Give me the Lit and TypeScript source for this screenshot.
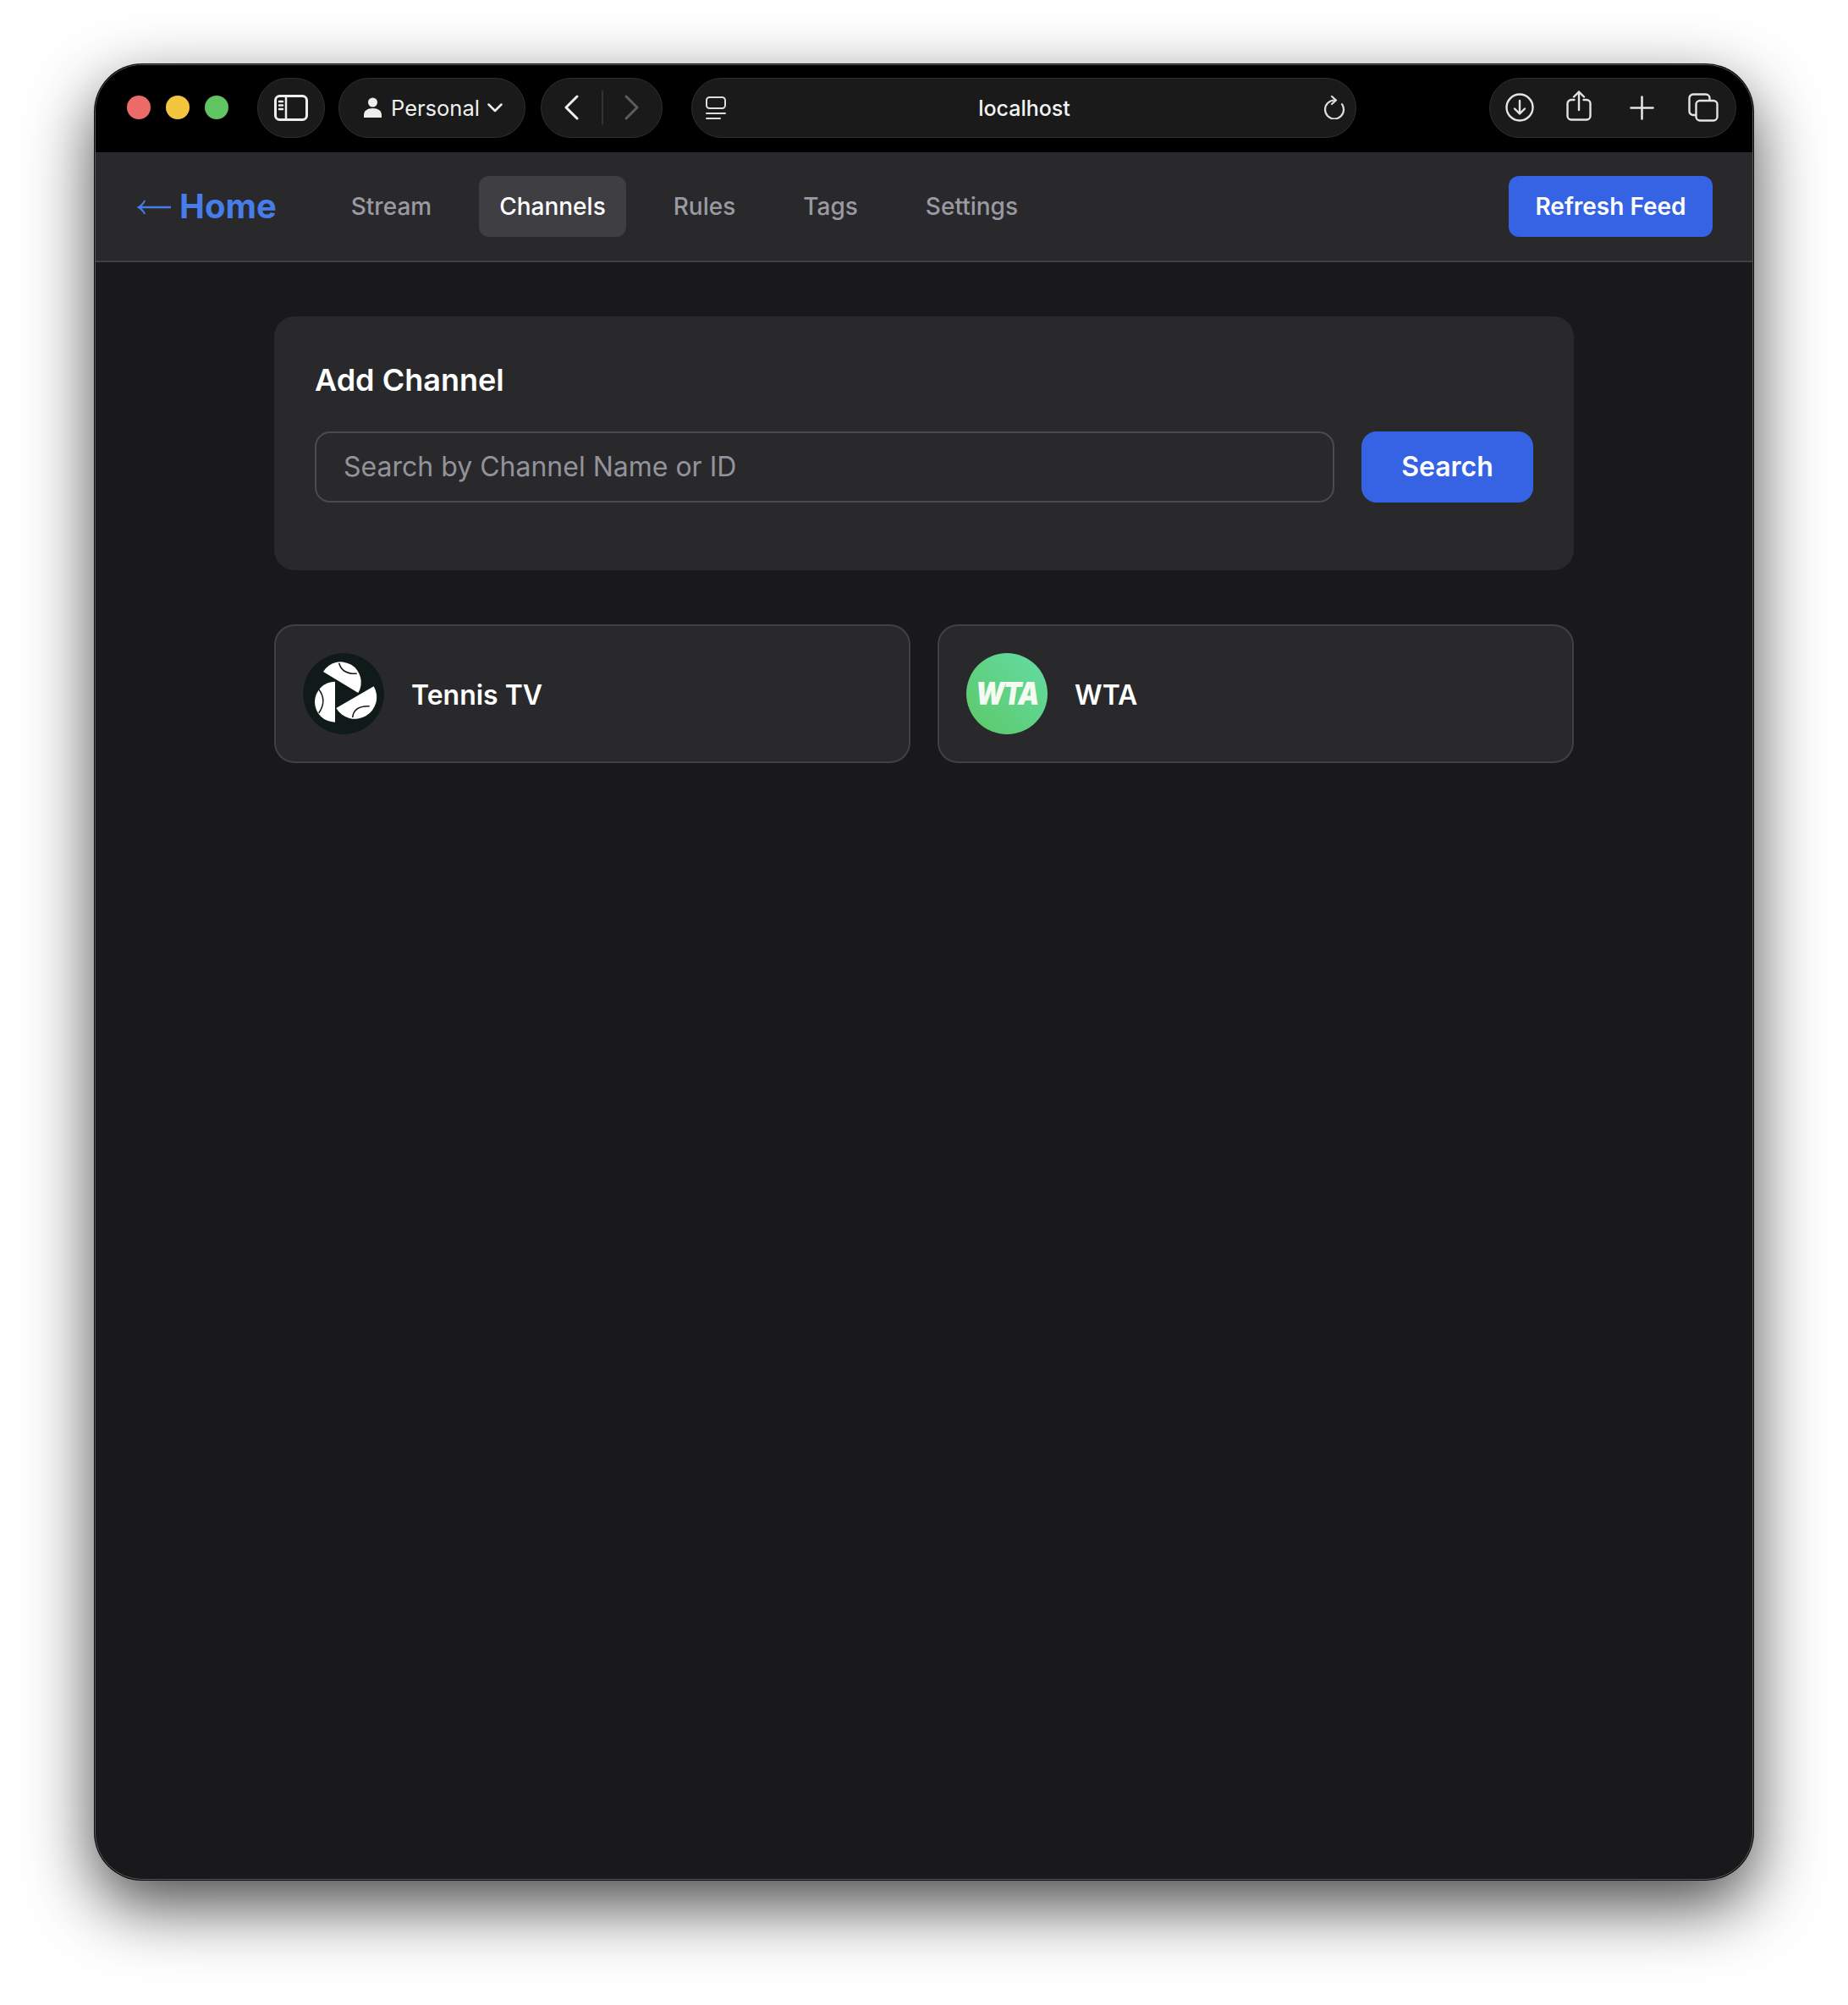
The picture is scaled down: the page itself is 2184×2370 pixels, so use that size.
import { LitElement, html, css } from 'lit'
import { customElement } from 'lit/decorators.js'

@customElement('app-root')
export class AppRoot extends LitElement {
  static styles = css`
    :host {
      display: block;
      width: 2184px;
      height: 2370px;
      box-sizing: border-box;
      padding: 76px 112px 148px;
      background: #fff;
      font-family: Inter, "Liberation Sans", sans-serif;
    }

    .window {
      height: 2146px;
      box-sizing: border-box;
      display: flex;
      flex-direction: column;
      overflow: hidden;
      background: #19191b;
      border: 1.5px solid #58585a;
      border-radius: 56px;
      box-shadow: 0 0 0 1px #0a0a0a, 0 30px 80px rgba(0, 0, 0, 0.72);
    }

    /* browser chrome */
    .toolbar {
      flex: none;
      height: 102.5px;
      box-sizing: border-box;
      display: flex;
      align-items: center;
      padding: 0 19px 2px 36.5px;
      background: #000;
      color: #eee;
    }
    .lights { display: flex; gap: 18px; margin-right: 34px; }
    .light { width: 28px; height: 28px; border-radius: 50%; }
    .red { background: #ec6a67; }
    .yellow { background: #f4c63f; }
    .green { background: #60c561; }

    .pill {
      flex: none;
      height: 71px;
      box-sizing: border-box;
      display: flex;
      align-items: center;
      background: #1a1a1a;
      border: 1.5px solid #2f2f2f;
      border-radius: 36px;
    }
    .pill svg { display: block; flex: none; }
    .sidebar { width: 80px; justify-content: center; margin-right: 16px; }
    .profile { width: 221px; margin-right: 18px; padding-left: 29px; font-size: 25.5px; color: #f0f0f0; }
    .profile span { margin: 0 9.5px 0 11.5px; }
    .history { width: 144px; margin-right: 34px; padding-left: 27px; }
    .history i { width: 2px; height: 40px; margin: 0 25px 0 27px; background: #333; }
    .address { width: 786px; padding: 0 12px 0 16px; justify-content: space-between; margin-right: 157px; }
    .address span { margin-top: 2px; font-size: 25px; font-weight: 500; color: #f4f4f4; }
    .actions { width: 292px; padding-left: 18.5px; }
    .actions .share { margin-left: 38px; }
    .actions .plus { margin-left: 45px; }
    .actions .copies { margin-left: 40px; }

    /* app header */
    .header {
      flex: none;
      display: flex;
      align-items: center;
      padding: 28px 47px 28px 48px;
      background: #29292c;
      border-bottom: 2px solid #414144;
    }
    .home {
      display: flex;
      align-items: center;
      gap: 10px;
      margin-right: 64px;
      font-size: 40px;
      font-weight: 700;
      color: #467de8;
    }
    .home svg { display: block; margin-top: 3px; }
    .tabs { flex: 1; display: flex; gap: 32px; }
    .tab {
      height: 72px;
      display: flex;
      align-items: center;
      padding: 0 24px;
      border-radius: 12px;
      font-size: 28px;
      font-weight: 500;
      color: #9a9aa3;
    }
    .tab.active { background: #3e3e43; color: #fff; }
    button {
      border: none;
      border-radius: 12px;
      background: #3663e3;
      color: #fff;
      font-family: inherit;
      font-weight: 600;
    }
    .refresh { width: 241px; height: 72px; font-size: 28px; }

    /* page */
    .main { flex: 1; padding-top: 64px; }
    .content { width: 1536px; margin: 0 auto; }
    .panel {
      box-sizing: border-box;
      height: 300px;
      padding: 48px;
      margin-bottom: 64px;
      background: #29292c;
      border-radius: 24px;
    }
    h2 { margin: 0 0 34px; font-size: 36px; line-height: 54px; font-weight: 600; color: #fff; }
    .search { display: flex; gap: 32px; }
    input {
      flex: 1;
      min-width: 0;
      height: 84px;
      box-sizing: border-box;
      padding: 0 32px;
      background: #29292c;
      border: 2px solid #4b4b4f;
      border-radius: 18px;
      font-family: inherit;
      font-size: 32px;
      color: #fff;
      outline: none;
    }
    input::placeholder { color: #93939c; opacity: 1; }
    .go { width: 203px; height: 84px; font-size: 32px; border-radius: 18px; }

    .channels { display: grid; grid-template-columns: 1fr 1fr; gap: 32px; }
    .channel {
      height: 164px;
      box-sizing: border-box;
      display: flex;
      align-items: center;
      gap: 32px;
      padding: 0 32px;
      background: #29292c;
      border: 2px solid #414144;
      border-radius: 24px;
      font-size: 32px;
      font-weight: 600;
      color: #fff;
    }
    .channel .name { margin-top: 3px; }
    .avatar { flex: none; display: block; width: 96px; height: 96px; border-radius: 50%; }
    .wta {
      display: flex;
      align-items: center;
      justify-content: center;
      background: linear-gradient(45deg, #5cc866, #64dca6);
      overflow: hidden;
    }
    .wta span {
      font-size: 37px;
      font-weight: 900;
      font-style: italic;
      letter-spacing: -2px;
      color: #f6fbf2;
      transform: scaleX(0.86);
    }
  `

  render() {
    return html`
      <div class="window">
        <div class="toolbar">
          <div class="lights">
            <div class="light red"></div>
            <div class="light yellow"></div>
            <div class="light green"></div>
          </div>
          <div class="pill sidebar">
            <svg width="40" height="31" viewBox="0 0 40 31" fill="none" stroke="#eee" stroke-width="3" stroke-linecap="round">
              <rect x="1.5" y="1.5" width="37" height="28" rx="5" />
              <path d="M14 2v27M6 8h4M6 12.500h4M6 17h4" stroke-width="2.500" />
            </svg>
          </div>
          <div class="pill profile">
            <svg width="21" height="24" viewBox="0 0 21 24" fill="#eee">
              <circle cx="10.500" cy="6" r="5.500" />
              <path d="M0 24v-3c0-5 4-8 10.500-8S21 16 21 21v3z" />
            </svg>
            <span>Personal</span>
            <svg width="18" height="11" viewBox="0 0 18 11" fill="none" stroke="#eee" stroke-width="2.500" stroke-linecap="round" stroke-linejoin="round">
              <path d="M1.500 1.500L9 9l7.500-7.500" />
            </svg>
          </div>
          <div class="pill history">
            <svg width="17" height="30" viewBox="0 0 17 30" fill="none" stroke="#f0f0f0" stroke-width="3" stroke-linecap="round" stroke-linejoin="round">
              <path d="M15 2L2 15l13 13" />
            </svg>
            <i></i>
            <svg width="17" height="30" viewBox="0 0 17 30" fill="none" stroke="#5c5c5c" stroke-width="3" stroke-linecap="round" stroke-linejoin="round">
              <path d="M2 2l13 13L2 28" />
            </svg>
          </div>
          <div class="pill address">
            <svg width="24" height="27" viewBox="0 0 24 27" fill="none" stroke="#ddd" stroke-width="2" stroke-linecap="round">
              <rect x="1" y="1" width="22" height="13" rx="3.500" />
              <path d="M1 20h22M1 26h16" />
            </svg>
            <span>localhost</span>
            <svg width="26" height="28" viewBox="0 0 26 28" fill="none" stroke="#ddd" stroke-width="2.200" stroke-linecap="round" stroke-linejoin="round">
              <path d="M13 5.500a11 11 0 1 0 11 11a11 11 0 0 0-2-6.300" />
              <path d="M10 1l5 4.500-5 4.500" />
            </svg>
          </div>
          <div class="pill actions">
            <svg width="34" height="34" viewBox="0 0 34 34" fill="none" stroke="#e4e4e4" stroke-width="2.400" stroke-linecap="round" stroke-linejoin="round">
              <circle cx="17" cy="17" r="15.500" />
              <path d="M17 9v15M11 18.500l6 6 6-6" />
            </svg>
            <svg class="share" width="30" height="40" viewBox="0 0 30 40" fill="none" stroke="#e4e4e4" stroke-width="2.400" stroke-linecap="round" stroke-linejoin="round">
              <path d="M9.500 11H6a4.500 4.500 0 0 0-4.500 4.500V30A4.500 4.500 0 0 0 6 34.500h18a4.500 4.500 0 0 0 4.500-4.500V15.500A4.500 4.500 0 0 0 24 11h-3.500" />
              <path d="M15 23V1.500M9 7.500l6-6 6 6" />
            </svg>
            <svg class="plus" width="29" height="29" viewBox="0 0 29 29" fill="none" stroke="#e4e4e4" stroke-width="2.600" stroke-linecap="round">
              <path d="M14.500 1.500v26M1.500 14.500h26" />
            </svg>
            <svg class="copies" width="36" height="34" viewBox="0 0 36 34" fill="none" stroke="#e4e4e4" stroke-width="2.400" stroke-linejoin="round">
              <path d="M9 26H6a4.500 4.500 0 0 1-4.500-4.500V6A4.500 4.500 0 0 1 6 1.500h15A4.500 4.500 0 0 1 25.500 6v3" />
              <rect x="9.500" y="9" width="25" height="23.500" rx="4.500" />
            </svg>
          </div>
        </div>

        <div class="header">
          <div class="home">
            <svg width="41" height="20" viewBox="0 0 41 20">
              <path d="M0.500 10Q6 7.500 9.500 1.500L11 2.500Q9 6.500 6.500 8.800H41v2.400H6.500Q9 13.500 11 17.500L9.500 18.500Q6 12.500 0.500 10z" fill="#467de8" />
            </svg>
            Home
          </div>
          <div class="tabs">
            <div class="tab">Stream</div>
            <div class="tab active">Channels</div>
            <div class="tab">Rules</div>
            <div class="tab">Tags</div>
            <div class="tab">Settings</div>
          </div>
          <button class="refresh">Refresh Feed</button>
        </div>

        <div class="main">
          <div class="content">
            <div class="panel">
              <h2>Add Channel</h2>
              <div class="search">
                <input placeholder="Search by Channel Name or ID" />
                <button class="go">Search</button>
              </div>
            </div>
            <div class="channels">
              <div class="channel">
                <svg class="avatar" viewBox="0 0 96 96">
                  <circle cx="48" cy="48" r="48" fill="#101a18" />
                  <g fill="#fff">
                    <path d="M24 22A24.100 24.100 0 0 1 65.300 47z" />
                    <path d="M38 33.700a24 24 0 0 0 0 48z" />
                    <path d="M39.300 65L83.700 39.300A25.600 25.600 0 0 1 39.300 65z" />
                  </g>
                  <g fill="none" stroke="#101a18" stroke-width="1.500">
                    <path d="M42.700 11.700Q46 25 63.700 24.300" />
                    <path d="M18.700 42.700Q29 56 18.700 71" />
                    <path d="M58.700 76Q60 62 78.700 62.700" />
                  </g>
                </svg>
                <span class="name">Tennis TV</span>
              </div>
              <div class="channel">
                <div class="avatar wta"><span>WTA</span></div>
                <span class="name">WTA</span>
              </div>
            </div>
          </div>
        </div>
      </div>
    `
  }
}
